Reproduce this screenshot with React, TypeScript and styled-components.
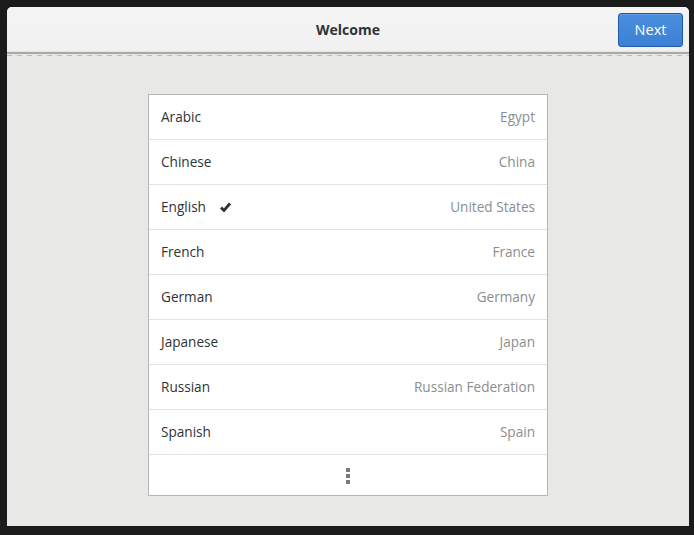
import React from "react";
import styled, { createGlobalStyle } from "styled-components";

const Global = createGlobalStyle`
  html, body { margin: 0; padding: 0; background: #1b1b1b; }
  body { font-family: "Open Sans", "Noto Sans", sans-serif; }
`;

const Screen = styled.div`
  width: 694px;
  height: 535px;
  padding: 7px 5px 9px 7px;
  box-sizing: border-box;
  background: #1b1b1b;
`;

const Window = styled.div`
  width: 682px;
  height: 519px;
  display: flex;
  flex-direction: column;
  background: #e8e8e7;
  border-radius: 5px 5px 0 0;
  overflow: hidden;
`;

const HeaderBar = styled.div`
  height: 45px;
  flex: none;
  display: grid;
  grid-template-columns: 1fr auto 1fr;
  align-items: center;
  padding: 0 6px 0 6px;
  background: linear-gradient(#f4f4f4, #f1f1f1);
  border-bottom: 2px solid #a9a9a8;
  box-shadow: inset 0 -1px 0 #e6e6e5;
`;

const Title = styled.div`
  grid-column: 2;
  font-size: 14px;
  font-weight: 700;
  color: #2e3436;
  padding-bottom: 1px;
`;

const NextButton = styled.button`
  grid-column: 3;
  justify-self: end;
  width: 65px;
  height: 34px;
  margin-top: 1px;
  border: 1px solid #1c5aa8;
  border-radius: 3px;
  background: linear-gradient(#4a8fde, #3b80d4);
  color: #ffffff;
  font-family: "Open Sans", "Noto Sans", sans-serif;
  font-size: 14.5px;
  padding: 0 0 1px;
  box-shadow: inset 0 1px 0 rgba(255, 255, 255, 0.15);
`;

const DashedRule = styled.div`
  height: 1px;
  margin-top: 1px;
  flex: none;
  background-image: repeating-linear-gradient(
    to right,
    #bdbdbc 0,
    #bdbdbc 5px,
    transparent 5px,
    transparent 10px
  );
`;

const Content = styled.div`
  flex: 1;
  display: flex;
  justify-content: center;
  padding-top: 38px;
`;

const List = styled.div`
  width: 400px;
  box-sizing: border-box;
  align-self: flex-start;
  background: #ffffff;
  border: 1px solid #b5b5b3;
  display: flex;
  flex-direction: column;
`;

const Row = styled.div`
  height: 45px;
  box-sizing: border-box;
  display: flex;
  align-items: center;
  padding: 0 12px 1px;
  border-bottom: 1px solid #e2e2e1;
  font-size: 13.6px;
`;

const Language = styled.span`
  color: #2e3436;
  display: flex;
  align-items: center;
  gap: 14px;
`;

const Region = styled.span`
  margin-left: auto;
  color: #8b8e8f;
`;

const MoreRow = styled.div`
  height: 40px;
  display: flex;
  align-items: center;
  justify-content: center;
`;

const Dots = styled.div`
  display: flex;
  flex-direction: column;
  gap: 2px;
  margin-top: 1px;
`;

const Dot = styled.span`
  width: 4px;
  height: 4px;
  background: #777a7b;
`;

const Check = () => (
  <svg width="11" height="10" viewBox="0 0 11 10">
    <path d="M1 5.5 L4 8.5 L10 1.5" fill="none" stroke="#2e3436" strokeWidth="2.8" strokeLinejoin="miter" />
  </svg>
);

const rows: { lang: string; region: string; checked?: boolean }[] = [
  { lang: "Arabic", region: "Egypt" },
  { lang: "Chinese", region: "China" },
  { lang: "English", region: "United States", checked: true },
  { lang: "French", region: "France" },
  { lang: "German", region: "Germany" },
  { lang: "Japanese", region: "Japan" },
  { lang: "Russian", region: "Russian Federation" },
  { lang: "Spanish", region: "Spain" },
];

export default function App() {
  return (
    <>
      <Global />
      <Screen>
        <Window>
          <HeaderBar>
            <Title>Welcome</Title>
            <NextButton>Next</NextButton>
          </HeaderBar>
          <DashedRule />
          <Content>
            <List>
              {rows.map((r) => (
                <Row key={r.lang}>
                  <Language>
                    {r.lang}
                    {r.checked && <Check />}
                  </Language>
                  <Region>{r.region}</Region>
                </Row>
              ))}
              <MoreRow>
                <Dots>
                  <Dot />
                  <Dot />
                  <Dot />
                </Dots>
              </MoreRow>
            </List>
          </Content>
        </Window>
      </Screen>
    </>
  );
}
